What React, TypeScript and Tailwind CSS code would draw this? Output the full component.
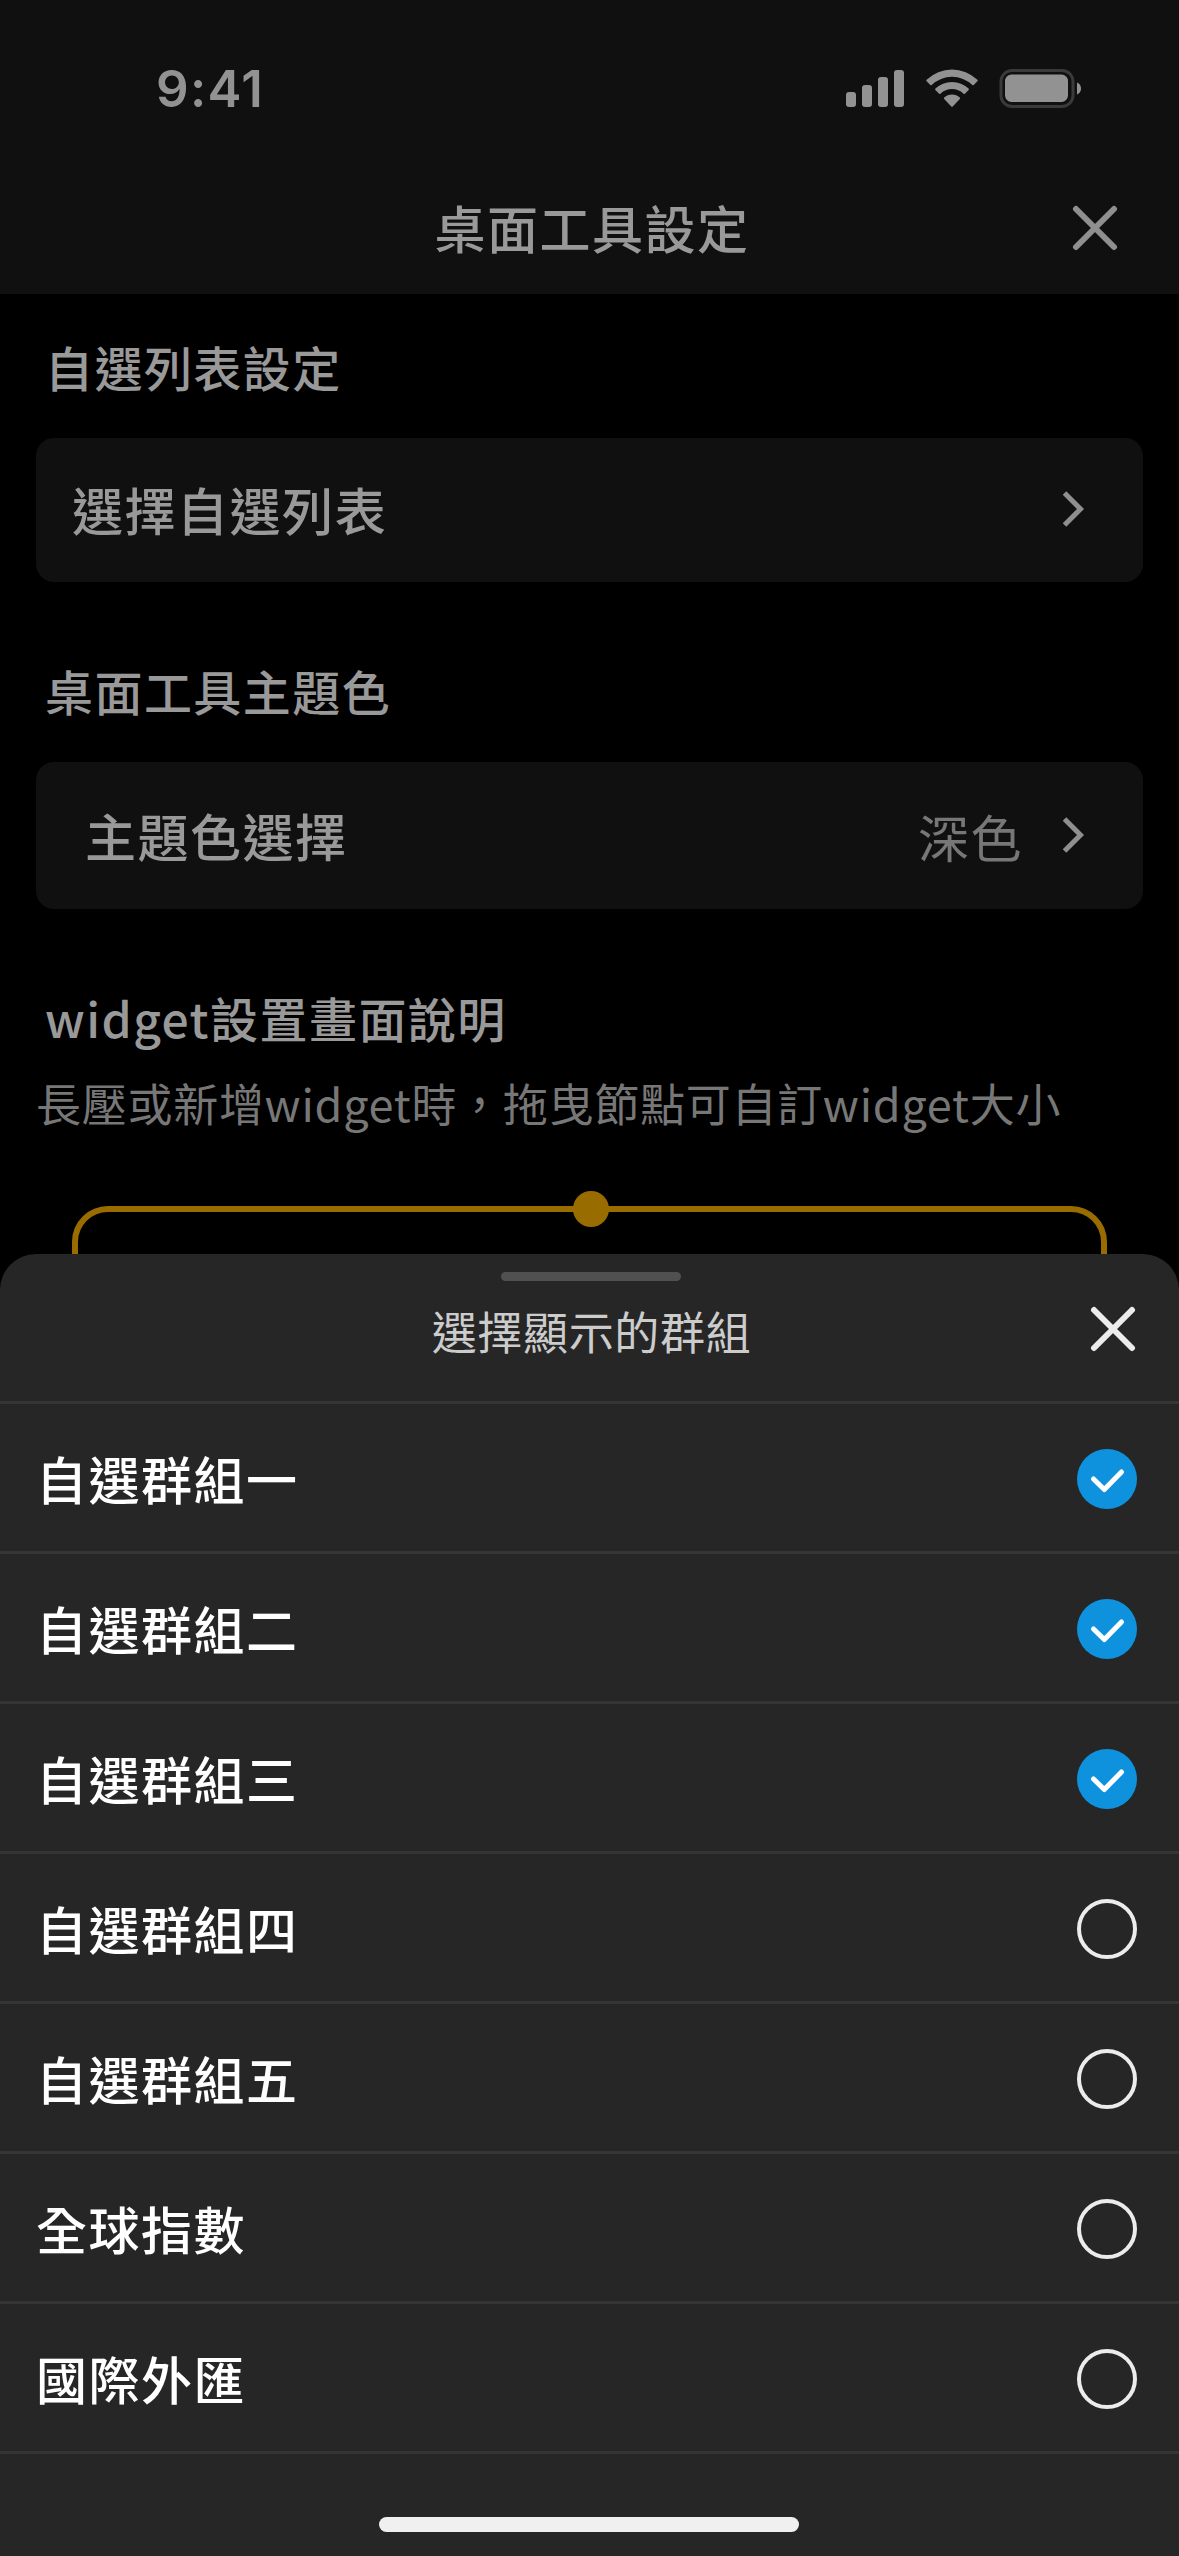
import React from "react";

type Group = { name: string; checked: boolean };

const groups: Group[] = [
  { name: "自選群組一", checked: true },
  { name: "自選群組二", checked: true },
  { name: "自選群組三", checked: true },
  { name: "自選群組四", checked: false },
  { name: "自選群組五", checked: false },
  { name: "全球指數", checked: false },
  { name: "國際外匯", checked: false },
];

function StatusBar() {
  return (
    <div className="flex h-[162px] items-center justify-between pt-[15px] pr-[97px] pl-[156px]">
      <span className="font-['Inter'] text-[51px] leading-none font-semibold tracking-[1.3px] text-[#929292]">9:41</span>
      <svg width="236" height="40" viewBox="0 0 236 40" className="text-[#929292]" fill="currentColor">
        <rect x="0" y="23" width="10" height="15" rx="3" />
        <rect x="16" y="16" width="10" height="22" rx="3" />
        <rect x="32" y="8" width="10" height="30" rx="3" />
        <rect x="48" y="1" width="10" height="37" rx="3" />
        <path d="M80.6 12.2a1 1 0 0 1 0-1.4A36.5 36.5 0 0 1 131.400 10.800a1 1 0 0 1 0 1.400L127.700 15.900a1 1 0 0 1-1.400 0A29.500 29.500 0 0 0 85.700 15.900a1 1 0 0 1-1.400 0Z" />
        <path d="M89.400 21a1 1 0 0 1 0-1.400A24 24 0 0 1 122.600 19.600a1 1 0 0 1 0 1.400L118.900 24.700a1 1 0 0 1-1.400 0A16.700 16.700 0 0 0 94.500 24.700a1 1 0 0 1-1.400 0Z" />
        <path d="M98.200 29.900a1 1 0 0 1 0-1.400A11.300 11.300 0 0 1 113.800 28.500a1 1 0 0 1 0 1.400L106.700 37.600a1 1 0 0 1-1.400 0Z" />
        <rect x="155" y="1.500" width="72" height="36" rx="11" fill="none" stroke="#3a3a3a" strokeWidth="3" />
        <rect x="159" y="5.500" width="63" height="27.500" rx="6.500" />
        <path d="M231 13.500v12c2.500-1 4-3.300 4-6s-1.500-5-4-6Z" />
      </svg>
    </div>
  );
}

function CloseIcon() {
  return (
    <svg width="46" height="46" viewBox="0 0 46 46" fill="none" stroke="currentColor" strokeWidth="6" strokeLinecap="round">
      <path d="M4 4l38 38M42 4L4 42" />
    </svg>
  );
}

function Chevron() {
  return (
    <svg className="mb-[2px]" width="24" height="40" viewBox="0 0 24 40" fill="none" stroke="#8f8f8f" strokeWidth="5">
      <path d="M2.500 4l16 16-16 16" />
    </svg>
  );
}

function CheckMark({ checked }: { checked: boolean }) {
  if (!checked) {
    return <span className="size-[60px] rounded-full border-4 border-[#ececec]" />;
  }
  return (
    <span className="flex size-[60px] items-center justify-center rounded-full bg-[#0f92dd]">
      <svg width="60" height="60" viewBox="0 0 60 60" fill="none" stroke="#fff" strokeWidth="5" strokeLinecap="round" strokeLinejoin="round">
        <path d="M16.500 30l10.800 10.500L44.500 23" />
      </svg>
    </span>
  );
}

function SectionLabel({ children }: { children: React.ReactNode }) {
  return (
    <h2 className="flex h-[144px] items-center pb-px pl-[45px] text-[48px] leading-none font-medium tracking-[0.03em] text-[#999]">
      {children}
    </h2>
  );
}

export default function App() {
  return (
    <div className="relative h-[2556px] w-[1179px] overflow-hidden bg-black font-['Noto_Sans_CJK_TC',sans-serif]" lang="zh-Hant">
      <header className="h-[294px] bg-[#101010]">
        <StatusBar />
        <div className="grid h-[132px] grid-cols-[140px_1fr_140px] items-center">
          <span />
          <h1 className="pb-px pl-[5px] text-center text-[51px] leading-none font-medium tracking-[0.03em] text-[#999]">桌面工具設定</h1>
          <button className="flex justify-self-end pr-[61px] text-[#8f8f8f]" aria-label="關閉">
            <CloseIcon />
          </button>
        </div>
      </header>

      <main>
        <SectionLabel>自選列表設定</SectionLabel>
        <div className="mx-[36px] flex h-[144px] items-center justify-between rounded-[18px] bg-[#101010] pr-[57px] pl-[36px]">
          <span className="pb-px text-[51px] leading-none font-medium tracking-[0.03em] text-[#999]">選擇自選列表</span>
          <Chevron />
        </div>

        <div className="mt-[36px]">
          <SectionLabel>桌面工具主題色</SectionLabel>
        </div>
        <div className="mx-[36px] flex h-[147px] items-center rounded-[18px] bg-[#101010] pr-[57px] pl-[49px]">
          <span className="flex-1 text-[51px] leading-none font-medium tracking-[0.03em] text-[#999]">主題色選擇</span>
          <span className="mt-[2px] mr-[39px] text-[51px] leading-none tracking-[0.03em] text-[#777]">深色</span>
          <Chevron />
        </div>

        <div className="mt-[36px] h-[126px]">
          <SectionLabel>widget設置畫面說明</SectionLabel>
        </div>
        <p className="flex h-[63px] items-center pl-[36px] text-[45px] leading-none tracking-[0.016em] whitespace-nowrap text-[#777]">
          長壓或新增widget時，拖曳節點可自訂widget大小
        </p>

        <div className="relative mx-[72px] mt-[72px] h-[400px] rounded-[36px] border-[6px] border-[#996c00]">
          <span className="absolute -top-[21px] left-1/2 ml-[1.5px] size-[36px] -translate-x-1/2 rounded-full bg-[#996c00]" />
        </div>
      </main>

      <section className="absolute inset-x-0 bottom-0 flex h-[1302px] flex-col rounded-t-[36px] bg-[#262626]">
        <span className="mt-[18px] ml-[501px] h-[9px] w-[180px] shrink-0 rounded-full bg-[#505050]" />
        <div className="grid h-[123px] shrink-0 grid-cols-[140px_1fr_140px] items-center border-b-[3px] border-[#353535] pb-[24px]">
          <span />
          <h2 className="pt-[3px] pl-[4px] text-center text-[45px] leading-none tracking-[0.015em] text-[#ccc]">選擇顯示的群組</h2>
          <button className="flex justify-self-end pr-[43px] text-[#ececec]" aria-label="關閉">
            <CloseIcon />
          </button>
        </div>
        <ul>
          {groups.map((g) => (
            <li key={g.name} className="flex h-[150px] items-center justify-between border-b-[3px] border-[#353535] pt-[3px] pr-[42px] pl-[36px]">
              <span className="pb-px text-[51px] leading-none font-medium tracking-[0.03em] text-white">{g.name}</span>
              <CheckMark checked={g.checked} />
            </li>
          ))}
        </ul>
        <span className="mt-[63px] ml-[379px] h-[15px] w-[420px] shrink-0 rounded-full bg-[#f0f0f0]" />
      </section>
    </div>
  );
}
